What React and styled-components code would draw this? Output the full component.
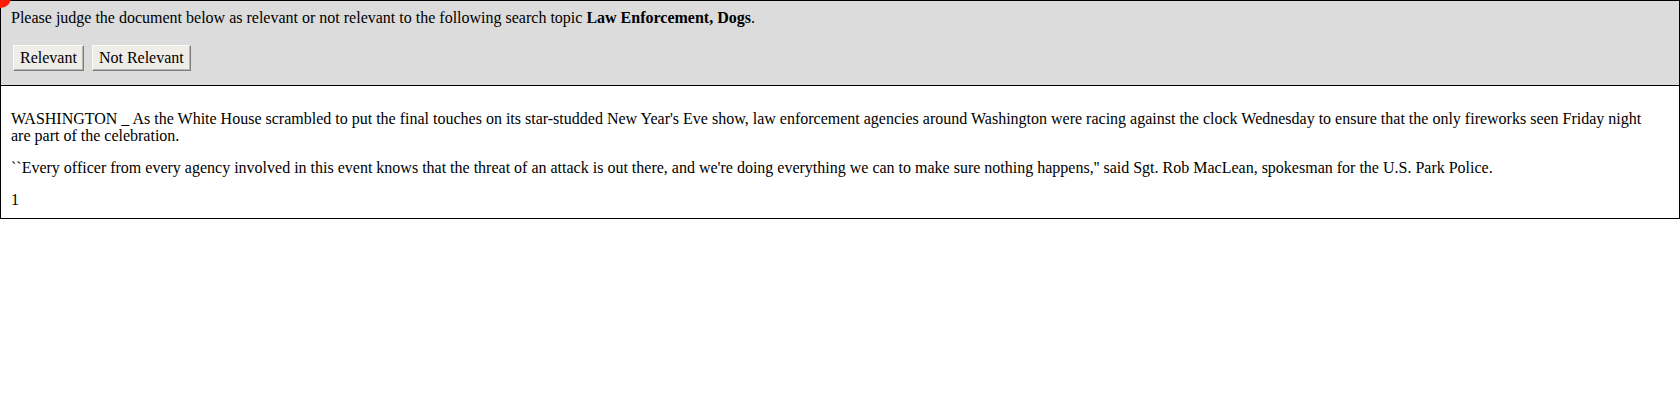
import React from 'react'
import { styled, createGlobalStyle } from 'styled-components';

const Global = createGlobalStyle`
  html, body {
    margin: 0;
    padding: 0;
    background: #fff;
  }
  body {
    font-family: "Liberation Serif", "Times New Roman", serif;
    font-size: 16px;
    color: #000;
  }
  * { box-sizing: border-box; }
`

const Page = styled.div`
  position: relative;
  width: 100%;
`

const Marker = styled.span`
  position: absolute;
  left: -10px;
  top: -13px;
  width: 21px;
  height: 21px;
  border-radius: 50%;
  background: #ff1a0a;
`

const Header = styled.div`
  background: #dcdcdc;
  border: 1px solid #000;
  padding: 8px 10px 14px 10px;

  .prompt{
    margin: 0;
    line-height: 17px;
  }
`

const Buttons = styled.div`
  margin-top: 19px;
  display: flex;
  gap: 8px;
  padding-left: 2px;
`

const JudgeButton = styled.button`
  font-family: "Liberation Serif", "Times New Roman", serif;
  font-size: 16px;
  color: #000;
  background: #efede8;
  border: 1px solid;
  border-color: #fbfaf8 #7d7d7d #7d7d7d #fbfaf8;
  box-shadow: inset -1px -1px 0 #b8b6b0;
  padding: 2px 6px 3px 6px;
  height: 26px;
  line-height: 19px;
  cursor: pointer;
`

const Doc = styled.div`
  border: 1px solid #000;
  border-top: none;
  padding: 9px 20px 10px 10px;

  p{
    margin: 15px 0;
    line-height: 17px;
  }
  .num{
    margin: 0;
    line-height: 17px;
  }
`

const App = () => {
  const paras = [
    "WASHINGTON _ As the White House scrambled to put the final touches on its star-studded New Year's Eve show, law enforcement agencies around Washington were racing against the clock Wednesday to ensure that the only fireworks seen Friday night are part of the celebration.",
    "``Every officer from every agency involved in this event knows that the threat of an attack is out there, and we're doing everything we can to make sure nothing happens,'' said Sgt. Rob MacLean, spokesman for the U.S. Park Police."
  ]

  return (
    <Page>
      <Global />
      <Marker />
      <Header>
        <p className='prompt'>
          Please judge the document below as relevant or not relevant to the following search topic <b>Law Enforcement, Dogs</b>.
        </p>
        <Buttons>
          <JudgeButton>Relevant</JudgeButton>
          <JudgeButton>Not Relevant</JudgeButton>
        </Buttons>
      </Header>
      <Doc>
        {paras.map((txt, i) => (
          <p key={i}>{txt}</p>
        ))}
        <div className='num'>1</div>
      </Doc>
    </Page>
  )
}

export default App
